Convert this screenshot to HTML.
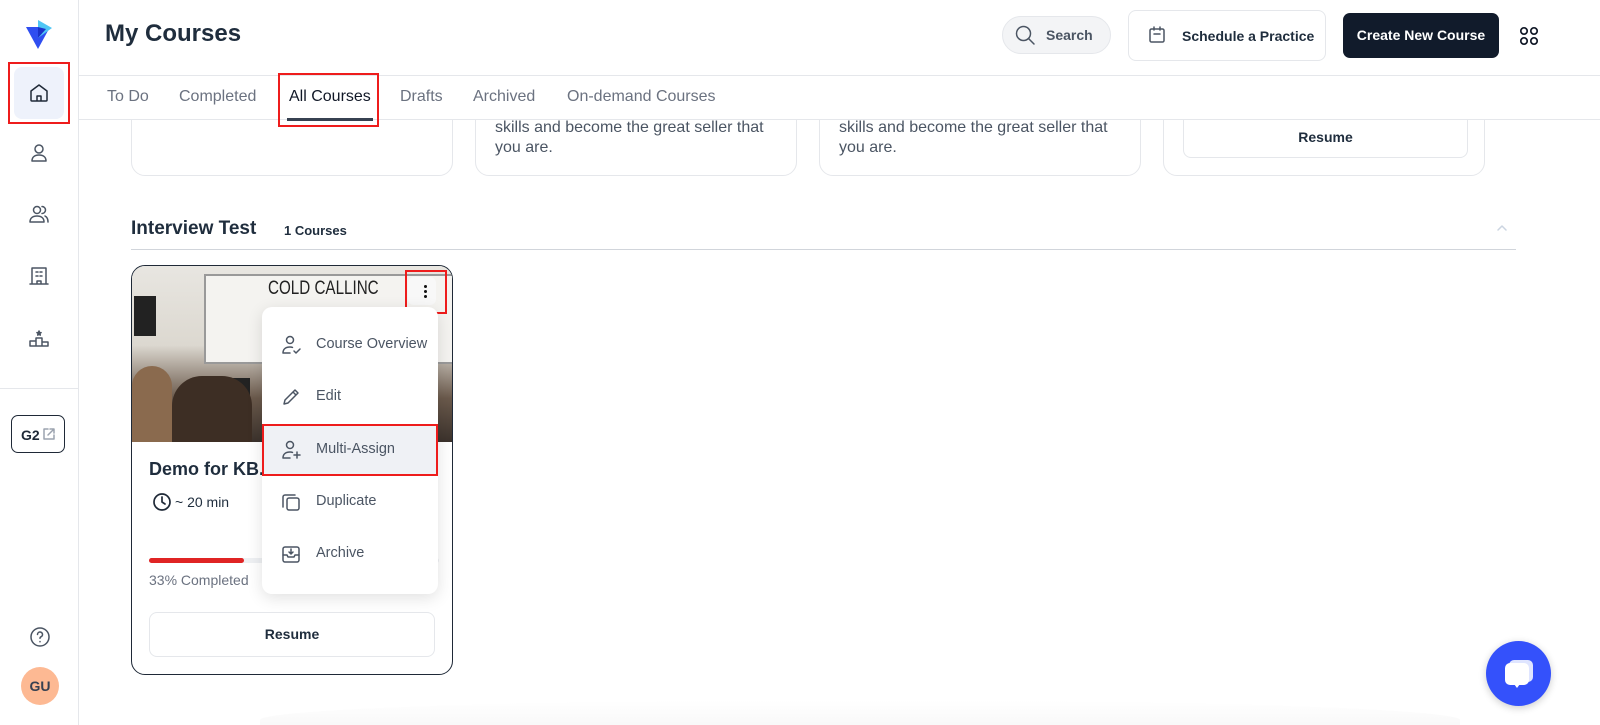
<!DOCTYPE html>
<html><head><meta charset="utf-8"><style>
*{box-sizing:border-box;margin:0;padding:0}
body{width:1600px;height:725px;overflow:hidden;background:#fff;font-family:"Liberation Sans",sans-serif;color:#1f2d3d;position:relative}
.abs{position:absolute}
.sb{left:0;top:0;width:79px;height:725px;border-right:1px solid #e5e7eb}
.ic{position:absolute;left:27px;width:24px;height:24px}
svg{fill:none;stroke:#4b5563;stroke-width:1.5;stroke-linecap:round;stroke-linejoin:round}
.tab{position:absolute;top:88px;font-size:16px;color:#6b7280}
.card{position:absolute;border:1px solid #e5e7eb;border-radius:14px;background:#fff}
.txt{font-size:16px;color:#4b5563;line-height:20px}
.mi{position:absolute;left:0;width:176px;height:52px;font-size:14.5px;color:#4b5563}
.mi span{position:absolute;left:54px;top:17px}
.mi svg{position:absolute;left:18px;top:15px;width:22px;height:22px}
.red{position:absolute;border:2px solid #ee1c1c}
</style></head><body>
<div class="card" style="left:131px;top:60px;width:322px;height:116px"></div>
<div class="card" style="left:475px;top:60px;width:322px;height:116px"><div class="txt abs" style="left:19px;top:57px">skills and become the great seller that<br>you are.</div></div>
<div class="card" style="left:819px;top:60px;width:322px;height:116px"><div class="txt abs" style="left:19px;top:57px">skills and become the great seller that<br>you are.</div></div>
<div class="card" style="left:1163px;top:60px;width:322px;height:116px"><div class="abs" style="left:19px;top:40px;width:285px;height:57px;border:1px solid #e5e7eb;border-radius:8px;text-align:center;font-size:14px;font-weight:bold;padding-top:27px">Resume</div></div>
<div class="abs" style="left:79px;top:0;width:1521px;height:120px;background:#fff;border-bottom:1px solid #e5e7eb"></div>

<div class="abs sb"></div>
<svg class="abs" style="left:24px;top:18px;width:30px;height:32px;stroke:none" viewBox="0 0 30 32"><path d="M2 9 L14 31 L26 9 Z" fill="#2f4ef0"/><path d="M14 2 L28 10 L14 20 Z" fill="#4fc6f5"/><path d="M14 9 L22 11 L14 20Z" fill="#1b31c9"/></svg>
<div class="abs" style="left:14px;top:67px;width:50px;height:52px;background:#eef2fb;border-radius:8px"></div>
<div class="red" style="left:8px;top:62px;width:62px;height:62px"></div>
<svg class="ic" style="top:81px;stroke:#1f2937" viewBox="0 0 24 24"><path d="M4 10 L12 4 L20 10 V19 a1 1 0 0 1-1 1 H5 a1 1 0 0 1-1-1Z M10 20 V15 h4 v5"/></svg>
<svg class="ic" style="top:141px" viewBox="0 0 24 24"><circle cx="12" cy="8" r="4"/><path d="M5 20 c0-4 3-6 7-6 s7 2 7 6Z"/></svg>
<svg class="ic" style="top:202px" viewBox="0 0 24 24"><circle cx="10" cy="8" r="3.5"/><path d="M3 20 c0-4 3-6 7-6 s7 2 7 6Z M15 4.5 a3.5 3.5 0 0 1 0 7 M18 14 c2 1 3 3 3 6"/></svg>
<svg class="ic" style="top:264px" viewBox="0 0 24 24"><path d="M5 20 V4 h14 v16 Z M3 20 h18 M9 8h2 M13 8h2 M9 12h2 M13 12h2 M10 20 v-3 h4 v3"/></svg>
<svg class="ic" style="top:326px" viewBox="0 0 24 24"><path d="M9 20 V12 h6 v8 M3 20 V15 h6 M15 16 h6 v4 M3 20h18"/><path d="M12 5 l.6 1.5 1.5.1-1.2 1 .4 1.5-1.3-.8-1.3.8.4-1.5-1.2-1 1.5-.1Z" fill="#4b5563"/></svg>
<div class="abs" style="left:0;top:388px;width:78px;border-top:1px solid #e5e7eb"></div>
<div class="abs" style="left:11px;top:415px;width:54px;height:38px;border:1.3px solid #1f2937;border-radius:7px;font-size:14px;font-weight:bold;color:#1f2937;padding:11px 0 0 9px">G2</div>
<svg class="abs" style="left:42px;top:427px;width:14px;height:14px;stroke:#9ca3af" viewBox="0 0 14 14"><path d="M6 2H2v10h10V8 M8 2h4v4 M12 2 L6 8"/></svg>
<svg class="abs" style="left:29px;top:626px;width:22px;height:22px" viewBox="0 0 22 22"><circle cx="11" cy="11" r="9"/><path d="M8.5 8.5 a2.5 2.5 0 1 1 3.5 2.3 c-.7.3-1 .8-1 1.5 M11 15.5v.2"/></svg>
<div class="abs" style="left:21px;top:667px;width:38px;height:38px;border-radius:50%;background:#fdb993;font-size:14px;font-weight:bold;color:#374151;text-align:center;line-height:38px">GU</div>

<div class="abs" style="left:105px;top:20px;font-size:24px;font-weight:bold;color:#1f2d3d">My Courses</div>
<div class="abs" style="left:1002px;top:16px;width:109px;height:38px;border:1px solid #e5e7eb;background:#f3f4f6;border-radius:19px;font-size:14px;font-weight:bold;color:#4b5563;padding:10px 0 0 43px">Search</div>
<svg class="abs" style="left:1014px;top:24px;width:22px;height:22px" viewBox="0 0 22 22"><circle cx="9.5" cy="9.5" r="7"/><path d="M15 15l5 5"/></svg>
<div class="abs" style="left:1128px;top:10px;width:198px;height:51px;border:1px solid #e5e7eb;border-radius:8px;font-size:14px;font-weight:bold;color:#1f2d3d;padding:17px 0 0 53px">Schedule a Practice</div>
<svg class="abs" style="left:1147px;top:25px;width:20px;height:20px" viewBox="0 0 20 20"><rect x="3" y="4" width="14" height="13" rx="1.5"/><path d="M7 2v3 M13 2v3 M7 9h6"/></svg>
<div class="abs" style="left:1343px;top:13px;width:156px;height:45px;background:#111b2b;border-radius:7px;font-size:14px;font-weight:bold;color:#fff;text-align:center;line-height:45px">Create New Course</div>
<svg class="abs" style="left:1518px;top:25px;width:22px;height:22px;stroke:#111827;stroke-width:1.7" viewBox="0 0 22 22"><circle cx="6" cy="6" r="3.2"/><circle cx="16" cy="6" r="3.2"/><circle cx="6" cy="16" r="3.2"/><circle cx="16" cy="16" r="3.2"/></svg>
<div class="abs" style="left:79px;top:75px;width:1521px;border-top:1px solid #e5e7eb"></div>
<div class="tab" style="left:107px">To Do</div>
<div class="tab" style="left:179px">Completed</div>
<div class="tab" style="left:289px;color:#111827">All Courses</div>
<div class="tab" style="left:400px">Drafts</div>
<div class="tab" style="left:473px">Archived</div>
<div class="tab" style="left:567px">On-demand Courses</div>
<div class="abs" style="left:287px;top:118px;width:86px;height:3px;background:#374151"></div>
<div class="red" style="left:278px;top:73px;width:101px;height:54px"></div>

<div class="abs" style="left:131px;top:218px;font-size:19px;font-weight:bold;color:#1f2d3d">Interview Test</div>
<div class="abs" style="left:284px;top:223px;font-size:13px;font-weight:bold;color:#1f2d3d">1 Courses</div>
<svg class="abs" style="left:1496px;top:223px;width:12px;height:10px;stroke:#cbd5e1" viewBox="0 0 12 10"><path d="M2 7l4-4 4 4"/></svg>
<div class="abs" style="left:131px;top:249px;width:1385px;border-top:1px solid #d1d5db"></div>

<div class="card" style="left:131px;top:265px;width:322px;height:410px;border-color:#1f2937;overflow:hidden">
 <div class="abs" style="left:0;top:0;width:322px;height:176px;background:linear-gradient(180deg,#e8e6e1 0%,#dcd8d0 45%,#6b5a4c 75%,#3b322c 100%)"></div>
 <div class="abs" style="left:72px;top:8px;width:250px;height:90px;background:#f4f3f0;border:2px solid #999"></div>
 <div class="abs" style="left:136px;top:12px;font-size:19px;color:#222;transform:scaleX(.8);transform-origin:left">COLD CALLINC</div>
 <div class="abs" style="left:2px;top:30px;width:22px;height:40px;background:#222"></div>
 <div class="abs" style="left:68px;top:112px;width:50px;height:40px;background:#222"></div>
 <div class="abs" style="left:0;top:100px;width:40px;height:76px;background:#8a6a4e;border-radius:20px 20px 0 0"></div>
 <div class="abs" style="left:40px;top:110px;width:80px;height:66px;background:#3d2e24;border-radius:30px 30px 0 0"></div>
 <div class="abs" style="left:276px;top:11px;width:28px;height:28px;background:#f8f8f8;border-radius:6px"></div>
 <div class="abs" style="left:17px;top:193px;font-size:18px;font-weight:bold;color:#1f2d3d">Demo for KB.</div>
 <svg class="abs" style="left:20px;top:226px;width:20px;height:20px;stroke:#1f2937;stroke-width:1.7" viewBox="0 0 20 20"><circle cx="10" cy="10" r="8"/><path d="M10 5v5l3 2"/></svg>
 <div class="abs" style="left:43px;top:228px;font-size:14px;color:#1f2d3d">~ 20 min</div>
 <div class="abs" style="left:17px;top:292px;width:290px;height:5px;background:#eef0f3;border-radius:3px"></div>
 <div class="abs" style="left:17px;top:292px;width:95px;height:5px;background:#e02424;border-radius:3px"></div>
 <div class="abs" style="left:17px;top:306px;font-size:14px;color:#6b7280">33% Completed</div>
 <div class="abs" style="left:17px;top:346px;width:286px;height:45px;border:1px solid #e5e7eb;border-radius:8px;text-align:center;line-height:43px;font-size:14px;font-weight:bold">Resume</div>
</div>
<div class="abs" style="left:424px;top:285px;width:3px;height:3px;border-radius:50%;background:#111;box-shadow:0 5px 0 #111,0 10px 0 #111"></div>
<div class="red" style="left:405px;top:270px;width:42px;height:44px"></div>

<div class="abs" style="left:262px;top:307px;width:176px;height:287px;background:#fff;border-radius:10px;box-shadow:0 4px 16px rgba(0,0,0,.12)">
 <div class="mi" style="top:12px"><svg viewBox="0 0 22 22"><circle cx="10" cy="6" r="3.5"/><path d="M3 19 c0-4 3-6 7-6 c1 0 2 .2 2.5.4 M3 19h7 M14 17l2 2 4-4"/></svg><span>Course Overview</span></div>
 <div class="mi" style="top:64px"><svg viewBox="0 0 22 22"><path d="M4 18 L5 14 L15 4 L18 7 L8 17 Z M13 6l3 3"/></svg><span>Edit</span></div>
 <div class="mi" style="top:117px;background:#eff1f5"><svg viewBox="0 0 22 22"><circle cx="10" cy="6" r="3.5"/><path d="M3 19 c0-4 3-6 7-6 c1 0 2 .2 2.5.4 M3 19h7 M17 13v6 M14 16h6"/></svg><span>Multi-Assign</span></div>
 <div class="mi" style="top:169px"><svg viewBox="0 0 22 22"><rect x="7" y="7" width="12" height="12" rx="2"/><path d="M15 4H5a2 2 0 0 0-2 2v10"/></svg><span>Duplicate</span></div>
 <div class="mi" style="top:221px"><svg viewBox="0 0 22 22"><rect x="3" y="4" width="16" height="15" rx="2"/><path d="M3 12h4l1 2h6l1-2h4 M11 6v5 M9 9l2 2 2-2"/></svg><span>Archive</span></div>
</div>
<div class="red" style="left:262px;top:424px;width:176px;height:52px"></div>

<div class="abs" style="left:260px;top:700px;width:1200px;height:25px;background:linear-gradient(180deg,#fff,#f6f6f6);border-radius:50%/20px 20px 0 0;opacity:.7"></div>
<div class="abs" style="left:1486px;top:641px;width:65px;height:65px;border-radius:50%;background:#3451fb;box-shadow:0 2px 8px rgba(0,0,0,.2)"></div>
<svg class="abs" style="left:1500px;top:655px;width:38px;height:38px;stroke:none" viewBox="0 0 38 38"><rect x="9" y="5" width="24" height="22" rx="5" fill="#dfe5ff"/><rect x="5" y="8" width="24" height="22" rx="5" fill="#fff"/><path d="M14 29 l3 4 3-4Z" fill="#fff"/></svg>
</body></html>
